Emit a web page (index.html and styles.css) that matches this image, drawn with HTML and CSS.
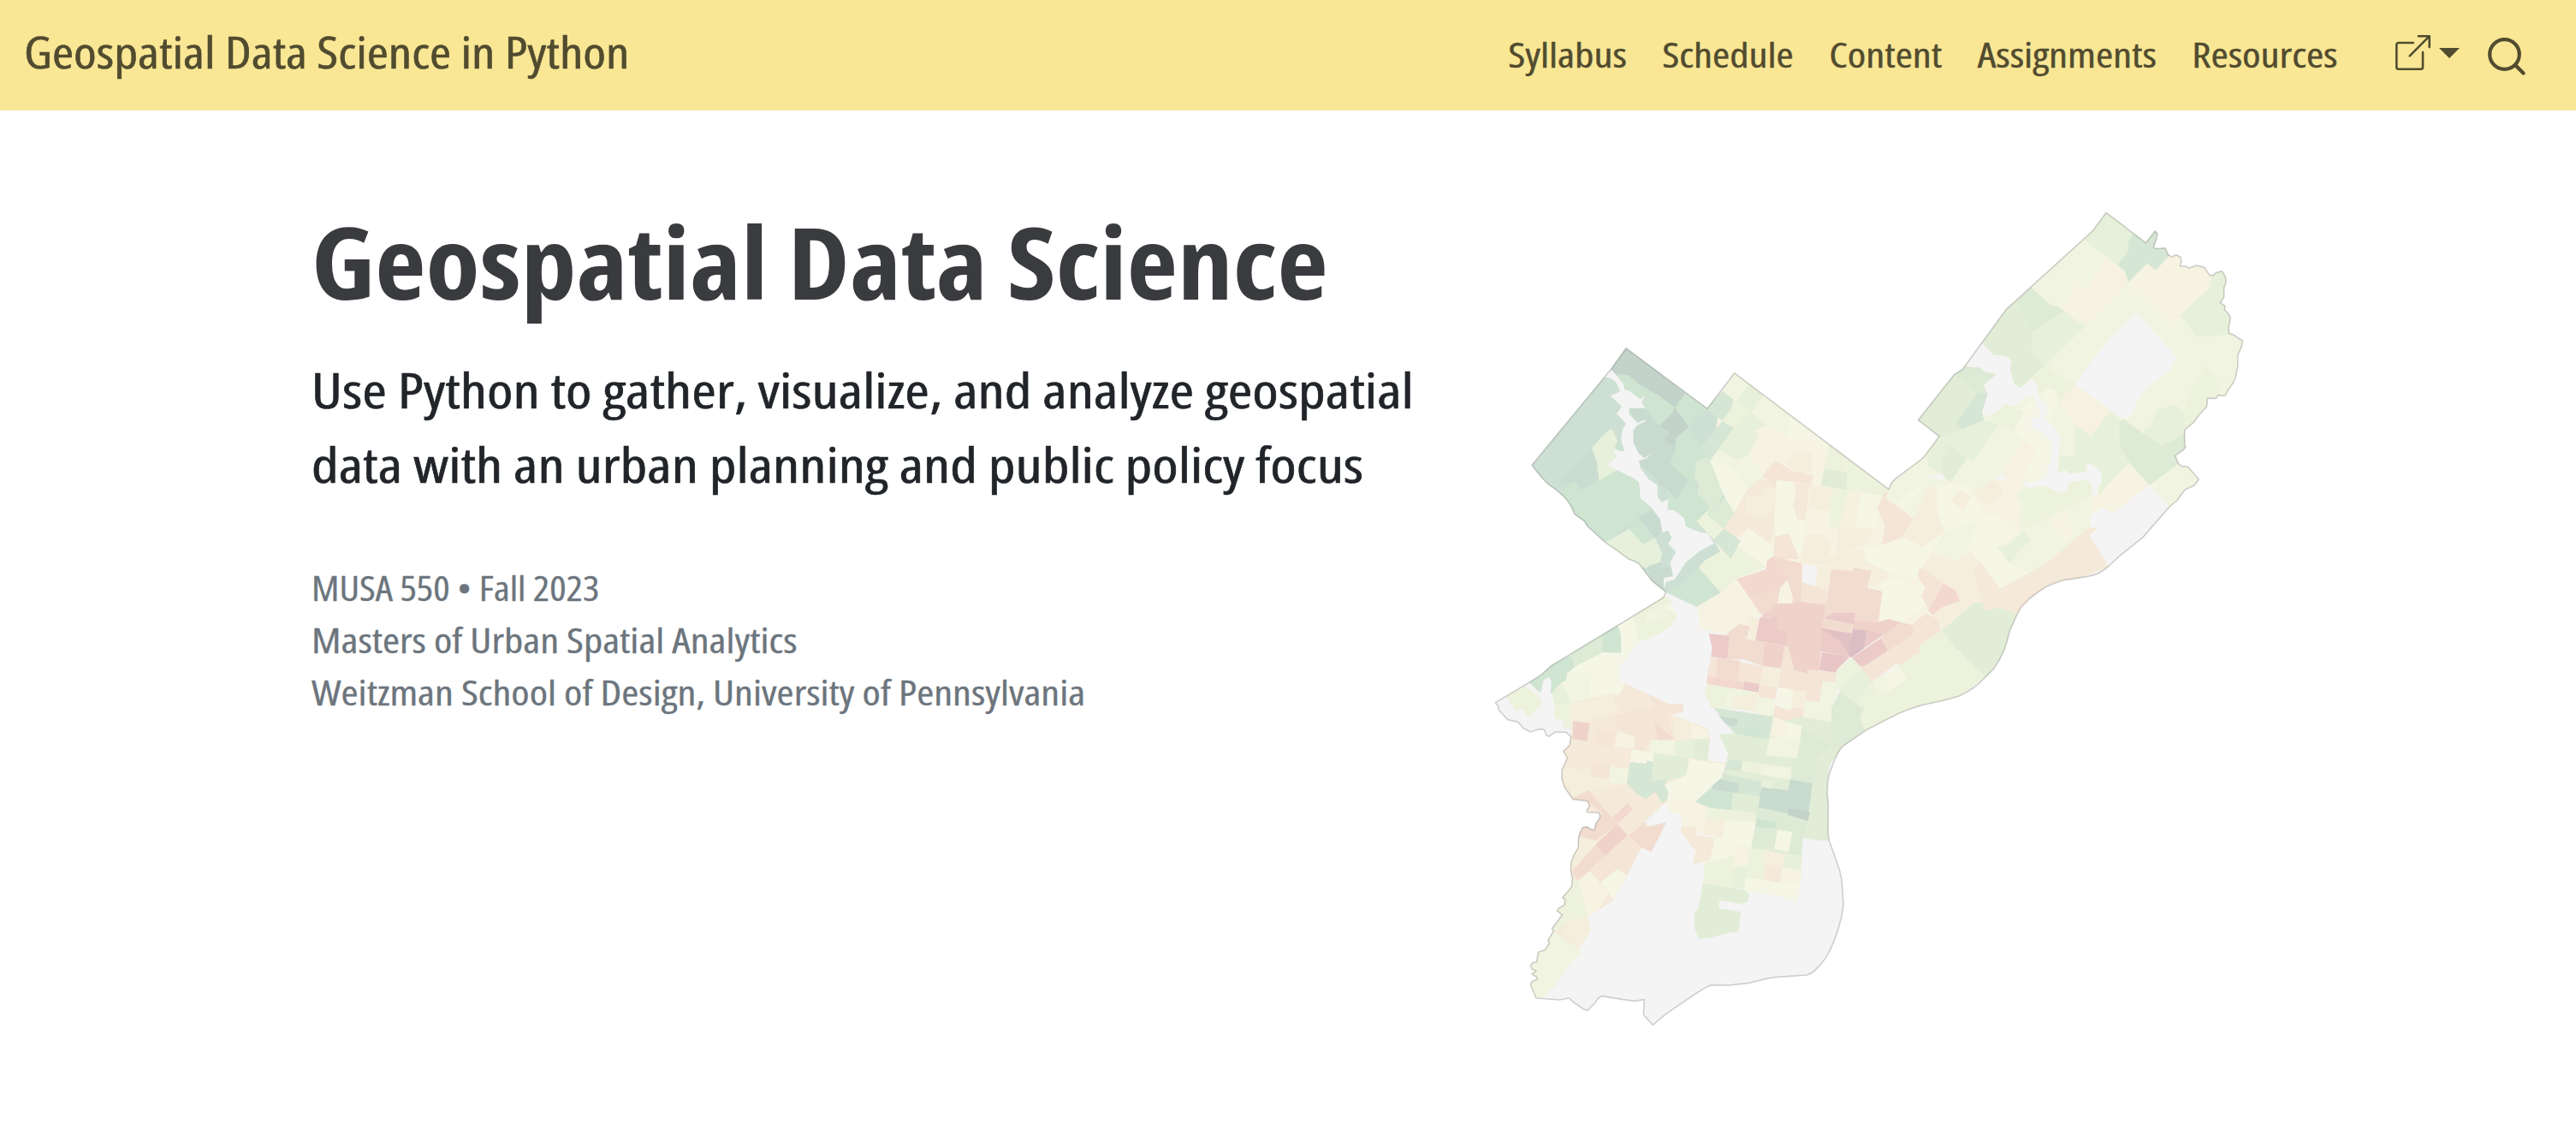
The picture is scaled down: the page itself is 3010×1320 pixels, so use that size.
FILE: index.html
```html
<!DOCTYPE html>
<html lang="en">
<head>
<meta charset="utf-8">
<title>Geospatial Data Science in Python</title>
<link rel="stylesheet" href="styles.css">
</head>
<body>
<header class="navbar">
  <a class="brand">Geospatial Data Science in Python</a>
  <nav class="links">
    <a>Syllabus</a>
    <a>Schedule</a>
    <a>Content</a>
    <a>Assignments</a>
    <a>Resources</a>
  </nav>
  <div class="tools">
    <svg class="icon-link" viewBox="0 0 16 16" fill="currentColor"><path fill-rule="evenodd" d="M8.636 3.5a.5.5 0 0 0-.5-.5H1.500A1.500 1.500 0 0 0 0 4.500v10A1.500 1.500 0 0 0 1.500 16h10a1.500 1.500 0 0 0 1.500-1.500V7.864a.5.5 0 0 0-1 0V14.500a.5.5 0 0 1-.5.5h-10a.5.5 0 0 1-.5-.5v-10a.5.5 0 0 1 .5-.5h6.636a.5.5 0 0 0 .5-.5z"/><path fill-rule="evenodd" d="M16 .5a.5.5 0 0 0-.5-.5h-5a.5.5 0 0 0 0 1h3.793L6.146 9.146a.5.5 0 1 0 .708.708L15 1.707V5.500a.5.5 0 0 0 1 0v-5z"/></svg>
    <span class="caret"></span>
    <svg class="icon-search" viewBox="0 0 44 44" fill="none" stroke="currentColor" stroke-width="4.200" stroke-linecap="round"><circle cx="19.500" cy="19.500" r="17.300"/><path d="M32 32l9.500 9.500"/></svg>
  </div>
</header>
<main class="hero">
  <section class="intro">
    <h1>Geospatial Data Science</h1>
    <p class="lead">Use Python to gather, visualize, and analyze geospatial<br>data with an urban planning and public policy focus</p>
    <div class="meta">
      <p class="term">MUSA 550 • Fall 2023</p>
      <p>Masters of Urban Spatial Analytics</p>
      <p>Weitzman School of Design, University of Pennsylvania</p>
    </div>
  </section>
  <svg class="map" viewBox="0 0 2730 2970">
    <defs>
      <path id="city" d="M180 940L458 603 510 530 795 742 890 617 1225 870 1431 1025 1440 1003 1455 987 1545 920 1555 910 1608 839 1534 782 1660 623 1690 604 1842 395 2147 118 2193 55 2332 161 2365 119 2373 130 2368 150 2359 177 2370 182 2400 179 2410 202 2423 211 2438 203 2454 211 2457 225 2452 242 2472 243 2483 250 2510 240 2537 247 2555 274 2568 275 2578 266 2599 260 2612 282 2612 305 2606 318 2606 352 2593 371 2610 382 2608 396 2618 405 2629 423 2623 455 2623 478 2640 483 2655 494 2671 503 2668 524 2654 556 2655 592 2645 638 2636 655 2620 678 2609 697 2586 695 2578 706 2548 706 2546 735 2518 765 2500 790 2468 817 2468 868 2472 876 2460 890 2435 907 2446 935 2458 944 2479 945 2518 990 2502 1011 2470 1026 2442 1063 2414 1087 2322 1193 2236 1262 2200 1296Q2180 1312 2160 1322C2120 1335 2090 1335 2050 1342C2020 1348 2000 1358 1980 1368Q1950 1387 1925 1407L1893 1440 1880 1465 1855 1520 1845 1560Q1830 1610 1798 1655L1740 1712Q1710 1735 1680 1748C1640 1763 1600 1770 1550 1780Q1505 1793 1470 1808Q1410 1837 1350 1870L1270 1925Q1250 1945 1235 1990C1220 2025 1216 2040 1215 2090L1219 2130 1218 2230 1222 2255 1259 2360Q1268 2395 1269 2430L1272 2480 1266 2520Q1250 2590 1220 2650Q1205 2677 1178 2705Q1165 2720 1145 2727L1030 2735 1000 2740 940 2755 870 2763 810 2762Q795 2765 740 2802L650 2863 604 2902 571 2866 574 2813 540 2818 500 2813 427 2801Q413 2803 403 2823L375 2851 362 2847 325 2822 310 2808 277 2814 195 2808 175 2760 182 2748 200 2742 195 2733 180 2724 195 2712 180 2706 175 2695 184 2682 197 2682 202 2647 225 2639 242 2615 236 2606 256 2572 250 2565 286 2516 268 2502 275 2492 294 2481 297 2462 287 2456 305 2435 320 2416 322 2390 316 2360 318 2330 328 2305 342 2282 344 2242 350 2225 358 2210 372 2207 385 2215 398 2220 405 2195 419 2175 416 2158 375 2157 372 2150 382 2135 375 2118 324 2111 295 2070 285 2040 285 2010 304 1966 290 1943 312 1922 317 1892 300 1876 262 1875 240 1891 232 1888 222 1866 205 1865 175 1875 150 1862 140 1850 130 1840 95 1832 65 1800 62 1785 52 1772 165 1705 215 1673 245 1645 475 1505 640 1405 650 1385 600 1345 555 1285 535 1275 520 1270 480 1240 440 1213 375 1155 365 1137 330 1112Q320 1085 305 1065Q280 1035 245 1013Q220 995 180 940z"/>
      <clipPath id="city-clip"><use href="#city"/></clipPath>
    </defs>
    <use class="none" href="#city"/>
    <g clip-path="url(#city-clip)">
      <!-- northwest -->
      <g transform="translate(30 450)">
        <polygon class="g3" points="150,490 480,80 765,292 860,360 775,475 860,660 785,750 815,790 735,850 812,937 730,988 620,935 540,860 300,670 140,500"/>
        <polygon class="g1" points="420,160 480,70 687,240 650,288 600,250 530,210 480,175 450,172"/>
        <polygon class="g4" points="450,172 490,175 530,210 600,250 650,288 640,325 620,325 598,350 575,330 560,300 545,290 548,245 530,260 490,230 470,215"/>
        <polygon class="g4" points="650,288 687,240 770,290 700,355"/>
        <polygon class="g3" points="700,355 765,292 818,335 745,425"/>
        <polygon class="g5" points="818,335 858,360 775,475 745,425"/>
        <polygon class="g5" points="760,292 818,230 857,260 850,290 818,335"/>
        <polygon class="g2" points="490,295 545,292 580,340 598,352 640,400 655,395 655,440 635,485 697,540 660,610 620,570 600,560 580,530 525,480 505,420 505,370 520,340"/>
        <polygon class="g1" points="598,352 640,310 650,288 700,357 685,385 655,395 650,425 615,405 630,375"/>
        <polygon class="g4" points="655,395 700,357 745,425 765,460 725,480 720,540 730,590 697,540 635,485 655,430"/>
        <polygon class="g6" points="725,480 765,460 775,475 820,590 800,640 770,630 728,590 735,560 718,530"/>
        <polygon class="g4" points="660,610 697,540 728,590 770,628 728,687 755,725 690,700 645,645 625,640 620,575"/>
        <polygon class="g6" points="770,630 800,640 825,600 860,660 822,712 765,665"/>
        <polygon class="g9" points="728,687 765,648 765,665 822,712 785,750"/>
        <polygon class="g2" points="360,430 378,480 385,545 320,578 300,545 240,560" opacity=".6"/>
        <polygon class="g8" points="360,430 410,375 430,362 450,405 440,430 448,465 412,490 450,507 385,545 378,480"/>
        <polygon class="g4" points="235,590 300,545 320,578 385,545 450,507 520,545 525,600 570,645 522,673 410,763 345,715 290,670 265,615"/>
        <polygon class="g2" points="522,673 568,648 595,675 607,720 582,745"/>
        <polygon class="g4" points="490,713 522,673 582,745 540,767"/>
        <polygon class="g8" points="405,763 490,713 540,767 582,745 607,800 600,830 555,850 525,845 490,830"/>
        <polygon class="g2" points="555,845 600,830 607,850 645,850 640,880 615,885 610,925 570,905"/>
        <polygon class="g4" points="620,935 650,900 735,845 812,937 730,988"/>
        <polygon class="g3" points="650,890 690,820 785,760 815,790 735,845 660,920 620,935"/>
        <polygon class="none" points="400,180 424,150 448,178 470,205 475,225 492,230 530,260 548,245 535,270 548,290 492,290 490,310 520,343 548,330 550,335 520,350 505,370 505,410 525,450 545,465 565,452 555,465 525,475 530,500 560,540 590,560 590,600 605,620 628,610 625,645 648,648 683,675 690,705 740,725 765,728 788,765 740,790 690,830 650,890 620,900 612,920 612,885 645,880 635,830 655,795 628,765 640,745 628,720 607,725 600,680 570,640 530,605 525,550 505,535 412,490 448,463 435,430 455,440 475,440 462,400 468,365 480,345 447,310 465,285 425,247 460,232 445,200 425,185"/>
        <polygon class="y3" points="818,230 860,160 1402,570 1390,760 1190,850 970,850 870,890 785,750 860,660 775,475"/>
        <polygon class="g5" points="760,292 818,230 857,260 850,290 818,335"/>
        <polygon class="g5" points="818,335 858,360 775,475 745,425"/>
        <polygon class="y1" points="818,230 860,160 912,212 870,265"/>
        <polygon class="g8" points="912,205 962,245 920,305 870,265"/>
        <polygon class="g9" points="857,260 870,265 920,305 860,360 818,335 850,290"/>
        <polygon class="y1" points="960,245 1060,320 1040,395 950,350 920,305"/>
        <polygon class="g8" points="858,360 920,305 970,350 930,370 945,385 905,458 865,475 805,435"/>
        <polygon class="y1" points="775,475 805,435 865,470 905,458 970,520 958,530 1008,570 965,570 935,605 900,570"/>
        <polygon class="y2" points="775,475 848,495 905,575 860,660 820,590"/>
        <polygon class="y2" points="1055,320 1195,415 1180,440 1145,395 1130,440 1040,395"/>
        <polygon class="y3" points="945,385 970,350 1060,395 1135,400 1130,445 1075,445 1035,480 1000,475 960,520 905,458"/>
        <polygon class="o1" points="1035,480 1075,445 1135,448 1130,520 1080,515"/>
        <polygon class="o3" points="958,528 1002,473 1060,508 1137,527 1130,555 1008,543 1005,568"/>
        <polygon class="g9" points="1195,415 1255,460 1250,520 1175,500"/>
        <polygon class="g7" points="1175,500 1258,515 1252,578 1163,562"/>
        <polygon class="g9" points="1255,460 1402,570 1395,600 1252,578"/>
        <polygon class="o2" points="905,575 958,535 1008,570 1003,700 985,780 910,712 860,750 822,712 860,655"/>
        <polygon class="o1" points="905,590 935,605 965,570 1003,570 1000,640 960,675 895,660"/>
        <polygon class="y2" points="1008,543 1068,550 1075,590 1065,630 1080,680 1110,685 1105,745 1085,815 1048,735 1050,728 1005,740 1000,690"/>
        <polygon class="o2" points="1068,550 1130,555 1120,580 1110,685 1080,680 1065,630 1075,590"/>
        <polygon class="o1" points="1130,560 1200,572 1195,650 1120,640"/>
        <polygon class="g9" points="1200,572 1258,580 1225,715 1195,710"/>
        <polygon class="o1" points="1258,583 1305,588 1285,715 1225,715" opacity=".7"/>
        <polygon class="y2" points="1305,588 1375,597 1360,640 1370,690 1350,710 1283,708"/>
        <polygon class="o1" points="1225,715 1283,708 1350,710 1395,740 1190,815 1210,810"/>
        <polygon class="g6" points="770,630 800,640 825,600 860,660 822,712 765,665"/>
        <polygon class="g5" points="785,752 822,712 882,755 848,820"/>
        <polygon class="y2" points="872,770 910,712 985,765 995,800 970,845"/>
        <polygon class="g9" points="735,850 755,825 815,790 848,820 875,780 970,845 870,888 812,937"/>
        <polygon class="o3" points="1000,740 1050,730 1088,818 998,820"/>
        <polygon class="o1" points="1088,835 1105,745 1135,728 1175,735 1195,760 1190,840"/>
      </g>
      <!-- centre -->
      <g transform="translate(690 990)">
        <polygon class="y3" points="735,35 760,0 1440,0 1440,170 1300,290 1130,383 1040,430 860,560 700,500 660,245 737,35"/>
        <polygon class="y1" points="737,35 755,-10 970,0 910,35 885,20 828,130 737,65"/>
        <polygon class="y2" points="800,95 770,85 820,35 860,30"/>
        <polygon class="o1" points="828,138 885,20 910,35 912,120 940,185 860,240 790,205"/>
        <polygon class="o3" points="730,40 738,45 730,65 828,138 785,205 715,230 728,160 700,100"/>
        <polygon class="y2" points="910,20 1020,20 1060,100 1100,140 940,185 912,120"/>
        <polygon class="o1" points="960,75 990,35 1030,60 1000,110"/>
        <polygon class="o1" points="1040,50 1085,-15 1125,15 1145,45 1090,90"/>
        <polygon class="y1" points="940,185 1050,150 1020,235 975,290 890,245"/>
        <polygon class="y2" points="1050,150 1120,130 1200,180 1125,235 1160,290 1230,330 1130,383 1035,265 1020,235"/>
        <polygon class="y1" points="1200,180 1305,130 1440,60 1450,165 1300,290 1230,330 1165,292 1190,265 1240,215"/>
        <polygon class="g8" points="1122,235 1155,232 1215,180 1240,215 1185,260 1190,270 1162,292"/>
        <polygon class="y3" points="1305,140 1355,110 1395,185 1360,225"/>
        <polygon class="o1" points="860,310 890,255 975,290 1030,255 1070,300 1035,310 1070,440 1040,430 925,530 918,495 880,470 990,425 930,365 862,315"/>
        <polygon class="o2" points="1035,310 1065,290 1130,383 1300,290 1440,168 1478,170 1445,195 1515,305 1360,365 1200,470 1185,475 1130,450 1075,460"/>
        <polygon class="y2" points="660,245 800,205 860,240 935,185 890,255 850,320 860,380 840,350 750,330 655,285"/>
        <polygon class="y2" points="705,485 718,345 760,350 860,380 875,435 785,500"/>
        <polygon class="o3" points="845,315 862,313 932,365 880,460 885,465 855,410 870,380 843,345"/>
        <polygon class="r2" points="932,365 975,390 990,425 925,450 895,475 880,460"/>
        <polygon class="y3" points="70,445 150,398 208,350 290,470 245,520 210,510 170,545 78,520"/>
        <polygon class="o1" points="530,270 655,245 660,285 745,330 735,350 680,380 540,325 525,395 440,380 440,295 530,310"/>
        <polygon class="none" points="437,296 492,305 482,382 437,362"/>
        <polygon class="r1" points="335,270 437,295 437,360 430,520 385,540 290,470 208,350 310,315 315,285"/>
        <polygon class="r2" points="208,350 310,318 315,285 335,272 385,350 360,380 265,415"/>
        <polygon class="y3" points="360,380 385,352 405,410 403,437 350,438"/>
        <polygon class="o3" points="437,360 525,390 520,440 432,428"/>
        <polygon class="r3" points="350,435 400,435 432,428 520,440 515,485 505,600 497,668 460,680 410,670 365,660 370,580 280,560 290,485"/>
        <polygon class="r1" points="540,315 615,322 618,310 680,320 665,380 718,392 705,500 620,495 620,468 540,470 513,485"/>
        <polygon class="r4" points="288,485 325,490 350,478 350,528 385,536 380,582 273,565"/>
        <polygon class="r3" points="615,493 705,500 740,490 780,500 820,510 830,535 740,600 725,542 615,525"/>
        <polygon class="r4" points="510,488 545,468 622,468 618,508"/>
        <polygon class="r1" points="510,490 618,508 612,540 507,522"/>
        <polygon class="r4" points="505,520 612,540 605,622 503,602"/>
        <polygon class="p1" points="505,525 612,540 603,615 570,565"/>
        <polygon class="p2" points="615,525 665,530 655,592 610,625 600,615"/>
        <polygon class="r4" points="665,530 725,542 655,592"/>
        <polygon class="r4" points="612,625 715,555 738,600 655,655 640,655"/>
        <polygon class="r5" points="507,605 605,622 560,665 555,678 497,668"/>
        <polygon class="r1" points="712,555 780,502 830,515 828,540 750,600 738,600"/>
        <polygon class="o3" points="640,655 655,655 738,600 830,540 820,510 870,470 915,490 918,515 925,530 845,585 850,605 780,652 770,645 680,710"/>
        <polygon class="g7" points="925,530 1040,432 1070,430 1075,460 1130,450 1195,475 1150,610 1080,695 975,590"/>
        <polygon class="g9" points="845,585 925,530 990,610 1080,690 990,765 860,800 780,828 660,890 640,835 655,800 635,795 680,710 780,652 850,605"/>
        <polygon class="y1" points="680,710 730,685 745,738 712,762"/>
        <polygon class="y2" points="730,685 770,648 803,698 745,740"/>
        <polygon class="g9" points="560,665 612,625 640,655 680,710 635,790 570,745 552,720"/>
        <polygon class="g8" points="580,715 650,665 680,710 635,790 570,745"/>
        <polygon class="g6" points="570,745 635,792 655,800 640,835 660,885 580,940 540,950 540,800"/>
        <polygon class="r4" points="110,540 183,548 175,630 118,620 122,590"/>
        <polygon class="r1" points="170,545 215,507 253,513 245,560 376,582 365,660 300,655 230,630 175,630 183,548"/>
        <polygon class="o1" points="250,485 288,485 273,565 235,555 253,540"/>
        <polygon class="r3" points="305,572 376,582 362,662 300,652"/>
        <polygon class="o3" points="118,622 300,655 295,720 105,688"/>
        <polygon class="r1" points="140,625 220,635 210,705 135,695"/>
        <polygon class="o1" points="300,655 362,662 352,730 290,725"/>
        <polygon class="r2" points="105,688 235,710 230,738 103,718"/>
        <polygon class="r4" points="235,708 288,718 284,747 231,737"/>
        <polygon class="o3" points="376,582 395,590 410,670 460,665 558,678 552,712 510,708 497,782 450,775 352,730"/>
        <polygon class="r3" points="390,590 432,592 430,615 460,680 410,668"/>
        <polygon class="g9" points="95,755 103,718 180,730 284,747 277,812 120,800"/>
        <polygon class="y1" points="180,730 230,740 220,770 190,800 170,785"/>
        <polygon class="o1" points="190,800 200,765 284,747 277,812"/>
        <polygon class="o3" points="290,720 350,730 343,772 284,762"/>
        <polygon class="y1" points="284,765 343,772 335,832 273,820"/>
        <polygon class="y2" points="355,728 408,738 395,810 345,790"/>
        <polygon class="o1" points="408,738 453,743 445,805 400,795"/>
        <polygon class="o3" points="343,790 360,800 395,810 400,797 445,805 435,865 335,832"/>
        <polygon class="y1" points="510,708 555,715 565,745 540,800 540,850 443,830 450,775 497,782"/>
        <polygon class="g7" points="145,893 200,890 437,832 540,850 545,945 590,920 535,1000 526,1060 530,1268 440,1258 435,1320 255,1300 100,1190 62,1130 160,1030 178,960"/>
        <polygon class="g5" points="128,800 340,832 320,912 200,890 150,830"/>
        <polygon class="g2" points="145,830 212,840 208,865 175,862"/>
        <polygon class="g4" points="235,868 290,875 285,905 232,895"/>
        <polygon class="y3" points="335,832 385,850 378,912 325,900"/>
        <polygon class="y2" points="385,850 437,865 430,915 378,912"/>
        <polygon class="g6" points="437,870 540,935 490,970 480,1065 400,1055 405,975 422,975"/>
        <polygon class="y1" points="323,905 430,915 420,978 310,965"/>
        <polygon class="g5" points="180,980 228,988 222,1022 165,1018"/>
        <polygon class="g9" points="228,988 400,1010 395,1052 225,1022"/>
        <polygon class="y1" points="300,1000 400,1012 393,1052 290,1035"/>
        <polygon class="g5" points="155,1030 295,1060 290,1110 210,1100 115,1085"/>
        <polygon class="g2" points="120,1070 150,1050 215,1065 212,1100 120,1085"/>
        <polygon class="g4" points="62,1130 115,1085 195,1100 188,1158 100,1155"/>
        <polygon class="g2" points="295,1078 388,1090 395,1052 473,1065 460,1165 388,1160 383,1170 283,1150"/>
        <polygon class="g8" points="297,1052 335,1060 330,1085 295,1078"/>
        <polygon class="g6" points="278,1150 385,1172 458,1197 440,1258 435,1320 365,1300 300,1290 258,1300"/>
        <polygon class="g1" points="388,1152 465,1165 458,1197 385,1175"/>
        <polygon class="g4" points="278,1188 350,1203 340,1225 272,1215"/>
        <polygon class="y2" points="350,1228 403,1235 390,1305 340,1295"/>
        <polygon class="g9" points="105,1150 278,1170 272,1212 100,1190"/>
      </g>
      <!-- northeast -->
      <g transform="translate(1350 0)">
        <polygon class="y1" points="81,1025 200,900 258,839 184,782 500,380 843,50 1340,100 1340,750 1190,990 1064,1087 995,1010 790,1120 700,1100 555,1160 530,1040 480,970 390,1030 265,970"/>
        <polygon class="g8" points="767,152 843,50 940,125 920,165 920,190 882,238"/>
        <polygon class="g5" points="882,238 920,190 920,155 940,125 982,155 1015,110 1080,200 1016,258 987,233 921,298 907,258"/>
        <polygon class="y3" points="735,425 690,395 735,290 777,320"/>
        <polygon class="y4" points="777,320 840,210 907,258 920,300 775,447 735,435"/>
        <polygon class="y3" points="921,300 987,233 1016,258 1065,205 1110,200 1190,235 1210,285 1205,320 1130,400 1105,415 1108,430 1075,462 960,340 940,340"/>
        <polygon class="g8" points="1205,320 1212,275 1265,250 1290,480 1200,490 1155,490 1140,460 1100,415"/>
        <polygon class="g6" points="528,365 577,315 650,380 675,385 697,400 585,470 550,420"/>
        <polygon class="g7" points="400,510 492,385 528,360 585,470 582,540 632,588 540,670 520,655 505,600 512,575 495,560 445,553"/>
        <polygon class="g8" points="585,470 697,400 740,437 772,450 632,588 600,570 582,540"/>
        <polygon class="y2" points="520,820 555,750 550,745 580,705 608,740 610,780 580,770 580,808 620,825 650,860 655,900 630,980 580,1005 550,985 600,885 550,850"/>
        <polygon class="g9" points="583,638 632,588 660,612 735,658 680,720 665,680 640,670 615,690"/>
        <polygon class="y2" points="615,690 640,670 665,680 675,720 640,785 625,780 640,740"/>
        <polygon class="y4" points="550,850 600,885 550,985 540,1040 480,970"/>
        <polygon class="y4" points="680,720 733,656 858,750 790,840 735,800"/>
        <polygon class="g8" points="735,800 790,840 858,750 890,780 895,880 925,933 815,1045 828,975 770,930 770,965 715,970 675,965 680,905 735,912"/>
        <polygon class="g9" points="530,1040 560,1015 620,1010 690,1038 710,1000 780,992 800,1025 790,1048 695,1095 555,1165 535,1130 560,1075"/>
        <polygon class="g6" points="305,620 355,585 400,597 415,612 460,620 412,660 428,690 390,690"/>
        <polygon class="g7" points="180,782 305,620 390,690 312,795 340,815 260,845"/>
        <polygon class="g5" points="390,690 428,690 408,755 415,783 340,815 312,795"/>
        <polygon class="g8" points="260,845 340,815 415,783 470,795 375,925 290,865"/>
        <polygon class="g8" points="213,905 258,840 290,865 265,970 220,945"/>
        <polygon class="g7" points="290,865 357,915 297,1000 265,970 270,910"/>
        <polygon class="g9" points="408,755 435,770 492,722 512,735 555,755 520,820 470,795"/>
        <polygon class="none" points="350,590 405,508 445,553 500,562 512,580 505,600 520,655 540,670 583,638 602,665 600,690 640,740 625,780 660,805 685,840 672,920 672,965 700,958 715,970 770,965 780,950 770,930 805,945 825,965 828,1000 808,1020 815,1048 790,1048 800,1025 780,992 710,1000 705,1030 680,1038 620,1010 580,1020 550,1010 560,995 580,1005 630,980 655,900 650,860 620,825 580,808 580,770 610,780 608,740 590,700 570,698 512,735 492,722 435,770 408,755 428,690 412,660 460,620 415,612 400,597 365,597"/>
        <polygon class="none" points="733,656 850,500 950,405 1090,562 1065,610 985,668 950,720 935,760 905,780"/>
        <polygon class="g6" points="890,785 905,780 975,830 1040,872 1125,825 1130,875 1085,907 1096,935 995,1010 925,933 890,870"/>
        <polygon class="g8" points="975,815 1000,800 1020,748 1085,728 1115,750 1118,825 1040,872 975,830"/>
        <polygon class="g9" points="1115,745 1145,660 1192,592 1230,640 1245,695 1200,730 1118,830"/>
        <polygon class="y3" points="815,1045 925,933 995,1010 870,1108 830,1090 790,1115 795,1050"/>
        <polygon class="none" points="790,1115 830,1090 865,1108 995,1010 1064,1087 1000,1200 850,1293 785,1185 818,1160 785,1150"/>
      </g>
      <!-- west, southwest and south -->
      <g transform="translate(30 450)">
        <polygon class="y2" points="280,1150 610,945 660,1010 600,1080 525,1110 455,1200 455,1245 475,1255 460,1295 355,1320 228,1375 220,1290"/>
        <polygon class="g4" points="140,1250 215,1185 290,1155 302,1195 280,1215 280,1240 250,1255 220,1290 175,1285"/>
        <polygon class="g6" points="285,1150 395,1082 400,1145 302,1195"/>
        <polygon class="g4" points="395,1085 450,1050 462,1085 463,1148 398,1145"/>
        <polygon class="g9" points="505,1015 610,945 645,970 610,990 662,1015 640,1050 600,1080 525,1110"/>
        <polygon class="y1" points="555,1005 600,985 620,1005 650,1015 550,1045"/>
        <polygon class="g9" points="60,1300 125,1265 175,1298 187,1325 140,1375 118,1345 92,1352"/>
        <polygon class="g8" points="220,1290 255,1255 275,1290 285,1325 228,1330"/>
        <polygon class="y1" points="275,1215 370,1215 355,1250 355,1325 285,1325 265,1260"/>
        <polygon class="none" points="178,1300 190,1245 208,1232 218,1245 216,1285 228,1340 228,1380 190,1330"/>
      </g>
      <g transform="translate(0 1650)">
        <polygon class="o2" points="320,122 460,90 485,95 505,55 665,130 712,125 708,155 672,165 798,215 805,250 795,325 860,335 840,385 755,465 655,470 640,480 575,540 600,560 563,630 515,725 465,815 380,870 345,985 265,1110 215,1158 170,1158 170,1000 250,900 320,700 340,560 270,400 280,260 318,240"/>
        <polygon class="g9" points="258,130 320,122 318,215 288,212 292,185 258,178"/>
        <polygon class="o1" points="318,125 400,110 395,165 385,190 318,185"/>
        <polygon class="o1" points="400,110 460,90 485,160 388,178"/>
        <polygon class="o3" points="470,165 570,145 640,140 682,250 585,260 570,295 545,290 540,240 480,220"/>
        <polygon class="o3" points="595,95 665,130 712,125 708,155 640,165 605,140"/>
        <polygon class="r1" points="610,195 680,248 620,255"/>
        <polygon class="r3" points="325,187 382,195 373,258 323,250"/>
        <polygon class="o3" points="410,218 475,225 465,275 405,268"/>
        <polygon class="y3" points="480,220 535,240 540,265 530,285 470,275"/>
        <polygon class="o1" points="672,165 745,198 745,255 682,250"/>
        <polygon class="y3" points="735,195 798,220 800,248 745,250"/>
        <polygon class="y1" points="598,252 682,255 685,310 588,295"/>
        <polygon class="g8" points="682,258 748,250 750,318 685,310"/>
        <polygon class="g7" points="748,250 803,248 795,328 750,318"/>
        <polygon class="y2" points="530,285 608,300 605,330 585,325 580,337 525,330"/>
        <polygon class="g5" points="525,330 580,337 585,325 605,330 600,400 620,430 580,460 550,445 512,405"/>
        <polygon class="g7" points="608,300 685,308 730,320 722,375 700,385 660,395 600,400"/>
        <polygon class="y2" points="732,320 858,338 845,385 755,465 660,475 645,410 705,385 722,373"/>
        <polygon class="g5" points="600,398 655,390 645,410 658,435 655,460 635,475 610,430"/>
        <polygon class="y1" points="455,345 520,355 510,408 448,402"/>
        <polygon class="o3" points="392,335 455,343 450,390 385,380"/>
        <polygon class="o1" points="275,350 385,360 385,380 450,390 448,402 515,410 400,425 325,460"/>
        <polygon class="r1" points="320,458 378,430 430,490 480,548 405,605 340,590 345,555 430,510 370,465"/>
        <polygon class="r2" points="462,525 515,475 535,495 480,548"/>
        <polygon class="r3" points="402,620 480,548 515,588 438,658"/>
        <polygon class="r1" points="518,588 580,540 575,562 652,540 600,645 563,630"/>
        <polygon class="o1" points="335,590 410,607 400,640 310,710"/>
        <polygon class="r1" points="320,715 402,620 438,658 340,748"/>
        <polygon class="o3" points="438,658 515,588 563,630 515,725 480,705 420,752 385,715"/>
        <polygon class="y2" points="420,752 480,705 512,727 465,815 450,790"/>
        <polygon class="y3" points="340,748 385,715 450,790 410,850 375,870"/>
        <polygon class="g9" points="310,735 340,748 375,870 310,890 260,925 240,900 260,830"/>
        <polygon class="o1" points="285,925 320,885 375,870 388,920 345,985"/>
        <polygon class="y1" points="250,920 345,985 358,995 325,1025 265,1110 215,1158 180,1165 150,1000"/>
        <polygon class="y3" points="655,465 700,455 750,468 800,490 785,530 780,585 710,555 700,512 660,510"/>
        <polygon class="y2" points="785,530 965,540 945,650 790,685 805,600"/>
        <polygon class="o2" points="705,553 755,558 755,585 820,597 805,675 742,690 755,645 702,575"/>
        <polygon class="o1" points="787,527 858,535 848,598 782,585"/>
        <polygon class="g9" points="785,685 890,658 895,625 1005,640 990,745 928,760 885,775 780,755"/>
        <polygon class="y3" points="895,625 940,635 935,695 885,700"/>
        <polygon class="g8" points="890,700 938,695 925,775 880,765"/>
        <polygon class="o1" points="1003,640 1068,655 1058,702 997,695"/>
        <polygon class="o2" points="997,690 1058,702 1050,755 988,742"/>
        <polygon class="g8" points="1068,650 1128,660 1123,710 1060,700"/>
        <polygon class="y3" points="1058,702 1130,712 1120,765 1050,755"/>
        <polygon class="y2" points="930,735 988,742 1050,755 1120,765 1110,822 1050,800 925,782"/>
        <polygon class="g7" points="780,755 925,778 942,795 937,820 918,828 838,815 835,843 913,855 903,927 880,927 800,947 765,950 750,915 750,855 763,845"/>
      </g>
    </g>
    <use class="border" href="#city"/>
  </svg>
</main>
</body>
</html>
```
FILE: styles.css
```css
* { box-sizing: border-box; }

body {
  margin: 0;
  background: #fff;
  color: #212529;
  font-family: "Open Sans", sans-serif;
  font-stretch: 75%;
}

.brand, h1, .lead, .meta p { transform-origin: left; }

.navbar {
  display: flex;
  align-items: center;
  height: 129px;
  padding: 0 59px 0 28px;
  background: #f9e795;
  color: #514b2f;
  white-space: nowrap;
}

.brand {
  margin-right: auto;
  padding-bottom: 8px;
  font-size: 50.4px;
  transform: scaleX(1.206);
  -webkit-text-stroke: .5px;
}

.links {
  display: flex;
  gap: 34px;
  padding-bottom: 3px;
  font-size: 40px;
  transform: scaleX(1.22);
  transform-origin: right;
  -webkit-text-stroke: .4px;
}

.tools { display: flex; align-items: center; margin-left: 67px; }
.icon-link { width: 41px; height: 41px; margin-bottom: 6px; }
.caret {
  margin: 0 33px 6px 10px;
  border: 12px solid transparent;
  border-top-color: currentColor;
  border-bottom-width: 0;
}
.icon-search { width: 44px; height: 44px; margin-top: 2px; }

.hero { display: flex; padding: 101px 0 0 364px; }

.intro { width: 1366px; padding-top: 5px; white-space: nowrap; }

h1 {
  margin: 0;
  color: #3a3b3f;
  font-size: 116px;
  font-weight: 700;
  line-height: 140px;
  transform: scaleX(1.115);
}

.lead {
  margin: 37px 0 0;
  font-size: 57px;
  line-height: 87px;
  transform: scaleX(1.215);
  -webkit-text-stroke: .6px;
}

.meta { margin-top: 70px; color: #6c757d; }
.meta p {
  margin: 0;
  font-size: 40px;
  line-height: 61px;
  transform: scaleX(1.213);
  -webkit-text-stroke: .3px;
}
.meta .term { transform: scaleX(1.14); }

.map { width: 910px; height: 990px; }
.border { fill: none; stroke: #000; stroke-opacity: .17; stroke-width: 5; stroke-linejoin: round; }

/* choropleth scale: greens, yellows, oranges, reds, purples */
.none { fill: #f4f4f4; }
.g1 { fill: #c3d3c9; }
.g2 { fill: #c9dacf; }
.g3 { fill: #cde0d3; }
.g4 { fill: #d0e4d2; }
.g5 { fill: #d6e6d4; }
.g6 { fill: #dcead6; }
.g7 { fill: #e2edd7; }
.g8 { fill: #e7f0da; }
.g9 { fill: #edf2dd; }
.y1 { fill: #f1f4e1; }
.y2 { fill: #f6f6e6; }
.y3 { fill: #f6f3e3; }
.y4 { fill: #f6f1e1; }
.o1 { fill: #f6eedd; }
.o2 { fill: #f5ead9; }
.o3 { fill: #f4e5d6; }
.r1 { fill: #f1dccf; }
.r2 { fill: #f2d8ce; }
.r3 { fill: #efd2ca; }
.r4 { fill: #ebcac7; }
.r5 { fill: #e8c6c6; }
.p1 { fill: #e1c2c4; }
.p2 { fill: #dbbec4; }
```
